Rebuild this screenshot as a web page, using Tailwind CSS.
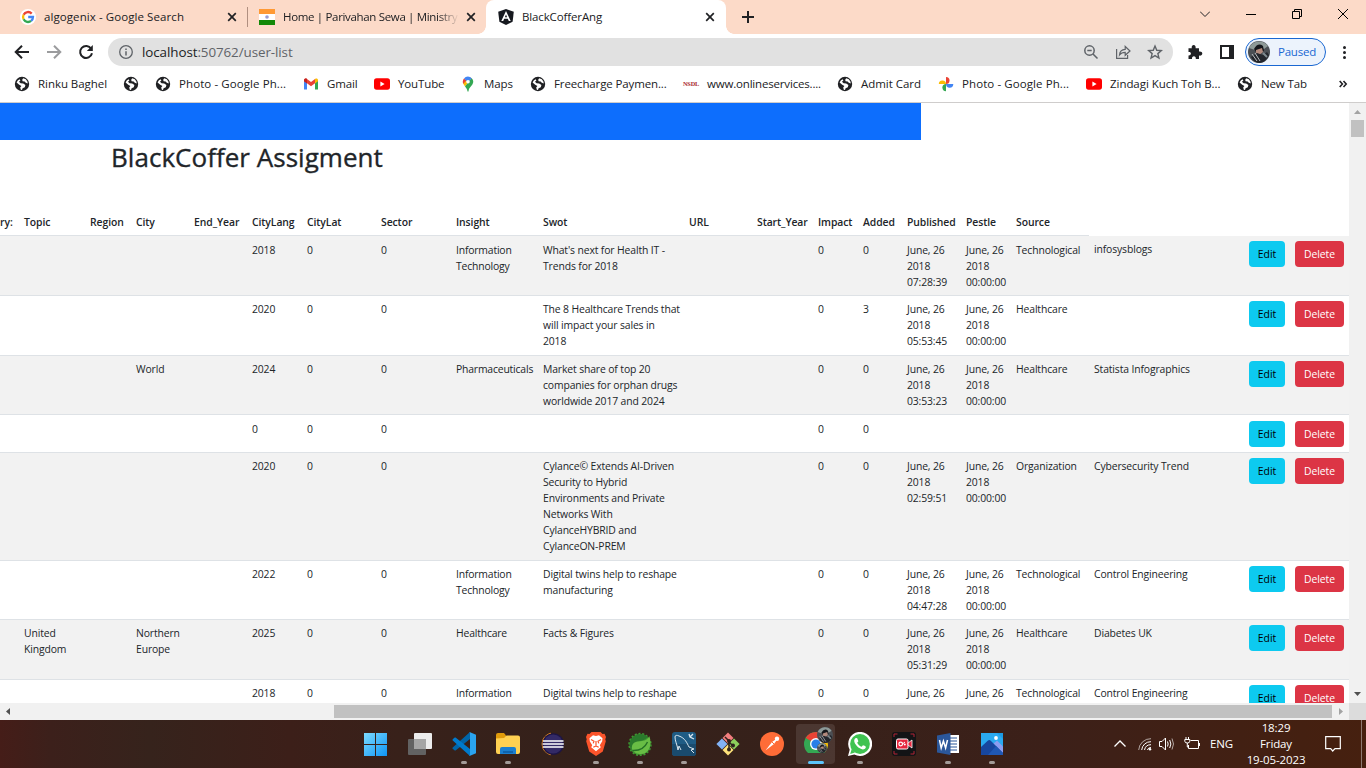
<!DOCTYPE html>
<html lang="en">
<head>
<meta charset="utf-8">
<title>BlackCofferAng</title>
<script src="https://cdn.jsdelivr.net/npm/@tailwindcss/browser@4"></script>
</head>
<body class="w-[1366px] h-[768px] overflow-hidden flex flex-col bg-white font-['Open_Sans','Noto_Sans',sans-serif] text-[#202124]">

<svg class="hidden">
  <symbol id="globe" viewBox="0 0 16 16"><circle cx="8" cy="8" r="7.2" fill="#202124"/><path d="M2.6 6.600Q3.400 4.200 5.600 3.200L6.400 4.400 5 5.800 6.600 7.200 9.200 7.400 11.400 9 10.800 11.200 8.600 12.200 8 14 6.800 13.800 6.200 11.600 7.400 10 5.200 8.800z" fill="#fff"/><path d="M9.200 2.200 11.800 3.300 13.400 5.600 13.800 7.600 11.800 6.800 10.600 5.400 8.600 5.200 8.200 3.800z" fill="#fff"/></symbol>
  <symbol id="yt" viewBox="0 0 16 16"><rect y="2.3" width="16" height="11.4" rx="2.6" fill="#f00"/><path d="M6.4 5.6v4.8L10.6 8z" fill="#fff"/></symbol>
  <symbol id="close" viewBox="0 0 10 10"><path d="M1.2 1.2l7.6 7.6M8.8 1.2 1.2 8.8" stroke="#202124" stroke-width="1.7" fill="none"/></symbol>
  <symbol id="avatar" viewBox="0 0 22 22"><circle cx="11" cy="11" r="11" fill="#4b4f54"/><path d="M1 7A11 11 0 0 1 20 5L16 8 12 6 7 9z" fill="#8e9a98"/><path d="M6 8q4-7 9-3l1 5-8 1z" fill="#15171b"/><path d="M8 9l6-2 1 4-4 3-3-2z" fill="#b28a7d"/><path d="M3 16l6-4 6 2 4-3 2 3q-3 7-9 8-6 0-9-6z" fill="#23262c"/><path d="M4 13l5 7M7 12l5 8" stroke="#b9bcc0" stroke-width="1"/><path d="M15 12l4 4" stroke="#7f8a8f" stroke-width="2"/></symbol>
</svg>

<!-- Tab strip -->
<header class="h-[34px] shrink-0 bg-[#fcdac8] flex items-stretch text-[11.500px] tracking-[-0.130px] whitespace-nowrap">
  <div class="w-[248px] flex items-center pl-5 relative">
    <svg class="w-4 h-4 shrink-0" viewBox="0 0 16 16"><circle cx="8" cy="8" r="8" fill="#fff"/><g fill="none" stroke-width="2.3"><path d="M11.7 4.6A5 5 0 0 0 3.6 5.7" stroke="#ea4335"/><path d="M3.6 5.7a5 5 0 0 0 0 4.6" stroke="#fbbc05"/><path d="M3.6 10.3a5 5 0 0 0 7.5 1.6" stroke="#34a853"/><path d="M11.1 11.9A5 5 0 0 0 13 8H8.2" stroke="#4285f4"/></g></svg>
    <span class="ml-2 w-[183px] tracking-[0.080px]">algogenix - Google Search</span>
    <svg class="w-[10px] h-[10px]"><use href="#close"/></svg>
    <i class="absolute right-0 top-[7px] w-px h-5 bg-[#b08f80]"></i>
  </div>
  <div class="w-[238px] flex items-center pl-[11px]">
    <svg class="w-4 h-4 shrink-0" viewBox="0 0 16 16"><path fill="#ff9933" d="M0 0h16v5H0z"/><path fill="#fff" d="M0 5h16v6H0z"/><path fill="#138808" d="M0 11h16v5H0z"/><circle cx="8" cy="8" r="1.8" fill="#9a9bd0"/></svg>
    <div class="ml-2 w-[176px] overflow-hidden tracking-[-0.330px] [mask-image:linear-gradient(to_right,black_88%,transparent)]">Home | Parivahan Sewa | Ministry</div>
    <svg class="w-[10px] h-[10px] ml-[7px] shrink-0"><use href="#close"/></svg>
  </div>
  <div class="w-[240px] flex items-center pl-3 bg-white rounded-t-lg relative">
    <i class="absolute -left-2 bottom-0 w-2 h-2 bg-[radial-gradient(circle_at_0_0,#fcdac8_7.5px,#fff_8px)]"></i>
    <i class="absolute -right-2 bottom-0 w-2 h-2 bg-[radial-gradient(circle_at_100%_0,#fcdac8_7.5px,#fff_8px)]"></i>
    <svg class="w-4 h-4 shrink-0" viewBox="0 0 16 16"><path d="M8 0l7.8 2.7-1.2 10L8 16l-6.6-3.3L.2 2.700z" fill="#16191f"/><path d="M3.300 12 8 2l4.700 10h-1.900l-1-2.300H6.200l-1 2.300zM6.900 8.200h2.200L8 5.500z" fill="#fff"/></svg>
    <span class="ml-2 w-[183px]">BlackCofferAng</span>
    <svg class="w-[10px] h-[10px]"><use href="#close"/></svg>
  </div>
  <svg class="w-3 h-3 ml-4 mt-[11px]" viewBox="0 0 12 12"><path d="M6 0v12M0 6h12" stroke="#202124" stroke-width="2"/></svg>
  <div class="ml-auto flex pt-[9px] gap-[36px] mr-[18px]">
    <svg class="w-[10px] h-[10px]" viewBox="0 0 10 10"><path d="M0 2.500l5 5 5-5" stroke="#202124" fill="none"/></svg>
    <svg class="w-[10px] h-[10px]" viewBox="0 0 10 10"><path d="M0 5.500h10" stroke="#000"/></svg>
    <svg class="w-[10px] h-[10px]" viewBox="0 0 10 10"><path d="M.5 2.500h7v7h-7zM2.500 2.500v-2h7v7h-2" stroke="#000" fill="none"/></svg>
    <svg class="w-[10px] h-[10px]" viewBox="0 0 10 10"><path d="M0 0l10 10M10 0 0 10" stroke="#000"/></svg>
  </div>
</header>

<!-- Address toolbar -->
<div class="h-9 shrink-0 flex items-center">
  <svg class="w-4 h-4 ml-[14px]" viewBox="0 0 16 16"><path d="M15 8H2M8 1.700 1.700 8 8 14.300" stroke="#202124" stroke-width="2" fill="none"/></svg>
  <svg class="w-4 h-4 ml-4" viewBox="0 0 16 16"><path d="M1 8h13M8 1.700 14.300 8 8 14.300" stroke="#9b9c9e" stroke-width="2" fill="none"/></svg>
  <svg class="w-4 h-4 ml-4" viewBox="0 0 16 16"><path d="M13.200 4.700A6 6 0 1 0 14 9.300" stroke="#202124" stroke-width="2" fill="none"/><path d="M14.800 1v6H8.800z" fill="#202124"/></svg>
  <div class="ml-[14px] w-[1065px] h-7 rounded-full bg-[#e1e1e1] flex items-center pl-[11px]">
    <svg class="w-[14px] h-[14px]" viewBox="0 0 14 14"><circle cx="7" cy="7" r="6.300" fill="none" stroke="#5f6368" stroke-width="1.300"/><path d="M7 6.200v4.300M7 3.500v1.500" stroke="#5f6368" stroke-width="1.500"/></svg>
    <span class="ml-[9px] text-[13.400px] tracking-[-0.080px] whitespace-nowrap text-[#5f6368]"><span class="text-[#202124]">localhost</span>:50762/user-list</span>
    <svg class="w-4 h-4 ml-auto" viewBox="0 0 16 16"><g fill="none" stroke="#5f6368" stroke-width="1.500"><circle cx="6.500" cy="6.500" r="4.700"/><path d="M10 10l4.500 4.500M4.300 6.500h4.400"/></g></svg>
    <svg class="w-4 h-4 ml-4" viewBox="0 0 16 16"><g fill="none" stroke="#5f6368" stroke-width="1.200"><path d="M1.600 5v9.400h11V11"/><path d="M4.500 11c.3-4 2.500-5.600 5.700-5.700V2.500L15 7l-4.800 4.300V8.400C7.600 8.400 5.800 9.200 4.500 11z"/></g></svg>
    <svg class="w-4 h-4 ml-4 mr-[10px]" viewBox="0 0 16 16"><path d="M8 2l1.750 4.250 4.600.35-3.500 3L11.950 14 8 11.600 4.050 14l1.100-4.400-3.500-3 4.600-.35z" fill="none" stroke="#5f6368" stroke-width="1.400"/></svg>
  </div>
  <svg class="w-4 h-4 ml-[14px]" viewBox="0 0 16 16"><path d="M1.500 4.300h3.300C4.300 2.300 5.300 1 6.700 1S9 2.300 8.600 4.300H12v3.300c2-.4 3.300.5 3.300 2s-1.300 2.400-3.300 2V15H8.800c.2-1.800-.6-2.700-1.900-2.700S4.800 13.200 5 15H1.500v-3.600c1.700.1 2.400-.6 2.400-1.800S3.200 7.800 1.500 8z" fill="#202124"/></svg>
  <svg class="w-[14px] h-[14px] ml-[17px]" viewBox="0 0 14 14"><path d="M0 0h14v14H0zM2 2v10h7V2z" fill="#202124" fill-rule="evenodd"/></svg>
  <div class="ml-[11px] w-[81px] h-7 rounded-full border border-[#1967d2] bg-[#ecf3fc] flex items-center pl-0.5">
    <svg class="w-[22px] h-[22px]"><use href="#avatar"/></svg>
    <span class="ml-2 text-[11.500px] tracking-[-0.220px] text-[#1967d2] whitespace-nowrap">Paused</span>
  </div>
  <div class="ml-[17px] flex flex-col gap-[2px]"><i class="w-[3px] h-[3px] rounded-full bg-[#202124]"></i><i class="w-[3px] h-[3px] rounded-full bg-[#202124]"></i><i class="w-[3px] h-[3px] rounded-full bg-[#202124]"></i></div>
</div>

<!-- Bookmarks bar -->
<nav class="h-[33px] shrink-0 border-b border-[#cfcdcc] flex items-center pl-[14px] pb-[4px] text-[11.500px] tracking-[-0.130px] whitespace-nowrap">
  <a class="w-[109px] flex items-center gap-2"><svg class="w-4 h-4"><use href="#globe"/></svg><span class="tracking-[-0.050px]">Rinku Baghel</span></a>
  <a class="w-[32px] flex items-center"><svg class="w-4 h-4"><use href="#globe"/></svg></a>
  <a class="w-[148px] flex items-center gap-2"><svg class="w-4 h-4"><use href="#globe"/></svg><span class="tracking-[0.090px]">Photo - Google Ph...</span></a>
  <a class="w-[71px] flex items-center gap-2"><svg class="w-4 h-4" viewBox="0 0 16 16"><path d="M1 4v9.500h3V7z" fill="#4285f4"/><path d="M15 4v9.500h-3V7z" fill="#34a853"/><path d="M1 4.500C1 2.500 3 2 4 3l4 3 4-3v4.300L8 10.300 4 7.300 1 5z" fill="#ea4335"/><path d="M12 3c1.200-1 3-.5 3 1.500v.7l-3 2.300z" fill="#fbbc04"/><path d="M1 4.500C1 2.500 3 2 4 3v4.500L1 5.200z" fill="#c5221f"/></svg><span>Gmail</span></a>
  <a class="w-[86px] flex items-center gap-2"><svg class="w-4 h-4"><use href="#yt"/></svg><span>YouTube</span></a>
  <a class="w-[70px] flex items-center gap-2"><svg class="w-4 h-4" viewBox="0 0 16 16"><path d="M4 2.400A5.200 5.200 0 0 0 3.400 8L8 5.800z" fill="#ea4335"/><path d="M3.300 7.800 5 10.400 11.500 2.200 9.600 1z" fill="#fbbc04"/><path d="M11.500 2A5.200 5.200 0 0 1 12.500 8.300C11.300 10.600 9 11.500 8.500 15.200c-.2.600-.8.600-1 0C7.200 12.800 6 11.700 5 10.400z" fill="#34a853"/><path d="M4 2.400A5.200 5.200 0 0 1 11.700 2.200L8 6.500z" fill="#4285f4"/><circle cx="8" cy="5.700" r="1.800" fill="#fff"/></svg><span>Maps</span></a>
  <a class="w-[153px] flex items-center gap-2"><svg class="w-4 h-4"><use href="#globe"/></svg><span>Freecharge Paymen...</span></a>
  <a class="w-[154px] flex items-center gap-2"><span class="w-4 font-['Liberation_Serif',serif] font-bold text-[6.300px] leading-4 tracking-[-0.200px] text-[#a9282e]">NSDL</span><span class="tracking-[-0.180px]">www.onlineservices....</span></a>
  <a class="w-[101px] flex items-center gap-2"><svg class="w-4 h-4"><use href="#globe"/></svg><span class="tracking-[-0.030px]">Admit Card</span></a>
  <a class="w-[148px] flex items-center gap-2"><svg class="w-4 h-4" viewBox="0 0 16 16"><path d="M8 8V1a3.500 3.500 0 0 1 0 7z" fill="#ea4335"/><path d="M8 8h7.300a3.500 3.500 0 0 1-7.300 0z" fill="#4285f4"/><path d="M8 8v7.200A3.500 3.500 0 0 1 8 8z" fill="#34a853"/><path d="M8 8H.8A3.500 3.500 0 0 1 8 8z" fill="#fbbc04"/></svg><span class="tracking-[0.090px]">Photo - Google Ph...</span></a>
  <a class="w-[151px] flex items-center gap-2"><svg class="w-4 h-4"><use href="#yt"/></svg><span class="tracking-[-0.050px]">Zindagi Kuch Toh B...</span></a>
  <a class="w-[101px] flex items-center gap-2"><svg class="w-4 h-4"><use href="#globe"/></svg><span>New Tab</span></a>
  <svg class="w-[10px] h-2" viewBox="0 0 10 8"><path d="M1.700 1l2.700 3-2.700 3M5.500 1l2.700 3-2.700 3" stroke="#202124" stroke-width="1.600" fill="none"/></svg>
</nav>

<!-- Page viewport -->
<main class="h-[600px] shrink-0 flex text-[#212529]">
  <section class="w-[1349px] h-full overflow-hidden">
    <div class="w-[921px] h-[37px] bg-[#0d6efd]"></div>
    <h2 class="h-[69px] pl-[111px] text-[26px] leading-[35px] font-medium tracking-[0.030px] [-webkit-text-stroke:0.350px_#212529] whitespace-nowrap">BlackCoffer Assigment</h2>
    <table class="w-[1349px] table-fixed border-collapse text-[10.400px] leading-4">
      <colgroup><col class="w-[19px]"><col class="w-[66px]"><col class="w-[46px]"><col class="w-[58px]"><col class="w-[58px]"><col class="w-[55px]"><col class="w-[74px]"><col class="w-[75px]"><col class="w-[87px]"><col class="w-[146px]"><col class="w-[68px]"><col class="w-[61px]"><col class="w-[45px]"><col class="w-[44px]"><col class="w-[59px]"><col class="w-[50px]"><col class="w-[78px]"><col class="w-[155px]"><col class="w-[105px]"></colgroup>
      <thead><tr id="head" class="h-[26px]"></tr></thead>
      <tbody id="rows"></tbody>
    </table>
  </section>
  <aside class="w-[17px] bg-[#f1f1f1] flex flex-col items-center">
    <svg class="w-[17px] h-[17px]" viewBox="0 0 17 17"><path d="M5 11h7L8.500 7z" fill="#a3a3a3"/></svg>
    <div class="w-[13px] h-[17px] bg-[#c1c1c1]"></div>
    <svg class="w-[17px] h-[17px] mt-auto" viewBox="0 0 17 17"><path d="M5 6h7l-3.500 4z" fill="#505050"/></svg>
  </aside>
</main>
<div class="h-[17px] shrink-0 flex items-center bg-[#f1f1f1]">
  <svg class="w-[17px] h-[17px]" viewBox="0 0 17 17"><path d="M10 5v7L6 8.500z" fill="#505050"/></svg>
  <div class="ml-[317px] w-[998px] h-[13px] bg-[#c1c1c1]"></div>
  <svg class="w-[17px] h-[17px]" viewBox="0 0 17 17"><path d="M7 5v7l4-3.500z" fill="#a3a3a3"/></svg>
  <div class="w-[17px] h-[17px] bg-[#dcdcdc]"></div>
</div>

<!-- Taskbar -->
<footer class="h-12 shrink-0 flex items-stretch text-white bg-[linear-gradient(90deg,#451d18_0,#3c201b_50px,#36231c_150px,#3c1f19_290px,#38211a_400px,#34211b_600px,#37211a_800px,#3c2019_1050px,#46200f_1366px)]">
  <div class="ml-[354px] flex">
    <div class="w-11 grid place-items-center"><svg class="w-6 h-6" viewBox="0 0 24 24"><defs><linearGradient id="wn" x1="0" y1="0" x2="24" y2="24" gradientUnits="userSpaceOnUse"><stop offset="0" stop-color="#7fdcff"/><stop offset="1" stop-color="#0b93f5"/></linearGradient></defs><path d="M0 1h11v11H0zM12 1h11v11H12zM0 13h11v11H0zM12 13h11v11H12z" fill="url(#wn)"/></svg></div>
    <div class="w-11 grid place-items-center"><svg class="w-6 h-6" viewBox="0 0 24 24"><rect x="6" y="1" width="18" height="16" rx="1" fill="#ececec"/><rect y="7" width="18" height="16" rx="1" fill="#626262"/><path d="M6 7h12v10H6z" fill="#a5a5a5"/></svg></div>
    <div class="w-11 grid place-items-center relative"><svg class="w-6 h-6" viewBox="0 0 24 24"><path d="M18 0 1 15.200c-.9.800-.6 1.300 0 1.800l1.400 1.200c.5.400 1 .4 1.500 0L18 7z" fill="#0065a9"/><path d="M18 24 1 8.800C.2 8 .4 7.500 1 7l1.400-1.200c.5-.4 1-.4 1.500 0L18 17z" fill="#007acc"/><path d="M17.500 0 24 2.800v18.400L17.500 24c-.5 0 .5-.6.5-1.200V1.200C18 .6 17 0 17.500 0z" fill="#2aa4f0"/></svg><i class="absolute bottom-1 w-[6px] h-[3px] rounded-full bg-[#a39b98]"></i></div>
    <div class="w-11 grid place-items-center relative"><svg class="w-6 h-6" viewBox="0 0 24 24"><path d="M0 3q0-2 2-2h6l2 2.500V8H0z" fill="#e09b0b"/><path d="M0 6.500 8 6l2.500-2.500H22q2 0 2 2V20q0 2-2 2H2q-2 0-2-2z" fill="#ffd152"/><path d="M4 22v-5q0-2 2-2h12q2 0 2 2v5z" fill="#1b7fd0"/><path d="M7 19h10v2H7z" fill="#0e63ae"/></svg><i class="absolute bottom-1 w-[6px] h-[3px] rounded-full bg-[#a39b98]"></i></div>
    <div class="w-11 grid place-items-center"><svg class="w-6 h-6" viewBox="0 0 24 24"><path d="M11 1.200A11 11 0 0 0 11 22.800 12 12 0 0 1 11 1.200z" fill="#f7941e" stroke="#f7941e"/><circle cx="13.200" cy="12" r="10.800" fill="#1d1545"/><circle cx="13.200" cy="12" r="9.500" fill="#332a66"/><path d="M3 9h20.500M2.600 12h21.200M3 15h20.500" stroke="#fff" stroke-width="1.500"/></svg></div>
    <div class="w-11 grid place-items-center relative"><svg class="w-6 h-6" viewBox="0 0 24 24"><path d="M7.500 0h9l2 2 2-.200L22 5l-.700 2.200.500 2-3 10.300L12 24l-6.800-4.500-3-10.300.500-2L2 5l1.500-3.200 2 .200z" fill="#fb542b"/><path d="M12 4l3-.7 3.500 3-.3 3-2.400 4 1 2-4.800 4-4.800-4 1-2-2.400-4-.3-3L9 3.300z" fill="#fff"/><path d="M7 7.500l3 1.700-.8 2.200M17 7.500l-3 1.700.8 2.200M12 9v5M9.300 15.300 12 14l2.700 1.300" stroke="#fb542b" stroke-width="1.200" fill="none"/></svg><i class="absolute bottom-1 w-[6px] h-[3px] rounded-full bg-[#a39b98]"></i></div>
    <div class="w-11 grid place-items-center relative"><svg class="w-6 h-6" viewBox="0 0 24 24"><circle cx="12" cy="12.500" r="10.500" fill="#3f9632"/><circle cx="12" cy="12.500" r="10.600" fill="none" stroke="#3f9632" stroke-width="2.200" stroke-dasharray="2 1.700"/><path d="M1.500 13A11 11 0 0 1 20 5Q16 9 9 9.500 3 11 3.500 19z" fill="#2a7a2c"/><path d="M4 17C3 10 9 9.500 14 9c4-.5 6-2 7.200-5 3.500 9-.700 18-8.200 18-4 0-7-1-9-5z" fill="#68bd45"/><path d="M4.500 18.500q11 .5 15-8.500" stroke="#236f25" stroke-width="1.400" fill="none"/></svg><i class="absolute bottom-1 w-[6px] h-[3px] rounded-full bg-[#a39b98]"></i></div>
    <div class="w-11 grid place-items-center relative"><svg class="w-6 h-6" viewBox="0 0 24 24"><rect width="24" height="24" rx="3" fill="#1f5c85"/><path d="M0 12h24v9q0 3-3 3H3q-3 0-3-3z" fill="#1a4b6e"/><path d="M6 18C5 12 3 9 3 5c0-2 2-2 4-1 6 2 8 7 10 11l5 2-3 1 3 3M6 18l1-4 2 4" stroke="#dbe7ef" fill="none"/><path d="M17 2l1 3 4 2M21 2l-3 3" stroke="#dbe7ef" stroke-width="1.300" fill="none"/></svg><i class="absolute bottom-1 w-[6px] h-[3px] rounded-full bg-[#a39b98]"></i></div>
    <div class="w-11 grid place-items-center"><svg class="w-6 h-6" viewBox="0 0 24 24"><g transform="rotate(45 12 12)"><rect x="3.800" y="3.800" width="7.800" height="7.800" fill="#f27e7e"/><rect x="12.400" y="3.800" width="7.800" height="7.800" fill="#8ccf5c"/><rect x="3.800" y="12.400" width="7.800" height="7.800" fill="#82b2f5"/><rect x="12.400" y="12.400" width="7.800" height="7.800" fill="#ffe27a"/></g><path d="M9 5l4 4v9M13 10l4 4" stroke="#2d211c" stroke-width="1.500" fill="none"/><circle cx="13" cy="9" r="2" fill="#2d211c"/><circle cx="17" cy="13.500" r="2" fill="#2d211c"/><circle cx="13" cy="17.500" r="2" fill="#2d211c"/></svg></div>
    <div class="w-11 grid place-items-center"><svg class="w-6 h-6" viewBox="0 0 24 24"><circle cx="12" cy="12" r="12" fill="#ff6c37"/><path d="M5.500 18.500 12 10l3.500-2.500 1 1L14 12z" fill="#fff"/><circle cx="17" cy="6.800" r="2.200" fill="#fff"/><path d="M12 10l2 2" stroke="#ff6c37"/></svg></div>
    <div class="w-11 grid place-items-center relative"><div class="absolute left-0.5 top-1 w-[39px] h-10 rounded bg-white/10"></div><svg class="w-[30px] h-[30px] absolute left-[9px] top-[3px]" viewBox="0 0 30 30"><circle cx="13" cy="21" r="12" fill="#34a853"/><path d="M2.600 15A12 12 0 0 1 23.400 15L13 21z" fill="#ea4335"/><path d="M2.600 15 10 26l3-4z" fill="#34a853"/><path d="M23.400 15A12 12 0 0 1 22 29l-4-3-5-9z" fill="#fbbc05"/><circle cx="13" cy="21" r="6" fill="#fff"/><circle cx="13" cy="21" r="4.600" fill="#287fe8"/><use href="#avatar" x="14" y="4" width="16" height="16"/><use href="#avatar" x="14" y="20" width="10" height="10"/></svg><i class="absolute left-[14px] bottom-1 w-4 h-[3px] rounded-full bg-[#5cc5fb]"></i></div>
    <div class="w-11 grid place-items-center relative"><svg class="w-6 h-6" viewBox="0 0 24 24"><path d="M0 24l1.700-6.200A12 12 0 1 1 6.300 22.400z" fill="#fff"/><circle cx="12" cy="12" r="9.900" fill="#3fc351"/><path d="M2.200 21.900l1.500-5 3.300 3.500z" fill="#3fc351"/><path d="M8.200 6c-.9 0-2 1.200-2 2.800C6.200 12 11 17.200 14.800 17.400c1.600 0 3-.9 3.100-2.600 0-.5-2.300-1.600-2.800-1.600-.6 0-1 1.500-1.600 1.500-1.300-.3-3.900-2.600-4.200-4 0-.5 1.200-1 1-1.700L9.200 6.200z" fill="#fff"/></svg><i class="absolute bottom-1 w-[6px] h-[3px] rounded-full bg-[#a39b98]"></i></div>
    <div class="w-11 grid place-items-center"><svg class="w-6 h-6" viewBox="0 0 24 24"><rect width="24" height="24" rx="3" fill="#121416"/><path d="M2 5V2h3.500M18.500 2H22v3M2 19v3h3.500M18.500 22H22v-3" stroke="#b32334" fill="none"/><rect x="4.500" y="7" width="11.500" height="10" rx="1.500" fill="#e5263e" stroke="#fff"/><path d="M16 11l4-3v8l-4-3z" fill="#e5263e" stroke="#fff" stroke-width=".8"/><circle cx="8.700" cy="12" r="1.800" fill="none" stroke="#fff" stroke-width="1.200"/><path d="M10.500 12l2.500-2" stroke="#fff"/><circle cx="12.800" cy="12.500" r="1" fill="#fff"/></svg></div>
    <div class="w-11 grid place-items-center relative"><svg class="w-6 h-6" viewBox="0 0 24 24"><path d="M13 3h10v18H13z" fill="#fff"/><path d="M14 6h7M14 9h7M14 12h7M14 15h7M14 18h7" stroke="#2b579a" stroke-width="1.200"/><path d="M1 3.500 14.500 1v22L1 20.500z" fill="#2b579a"/><path d="M3.500 8l1.700 8 2.200-7 2.200 7 1.900-8" stroke="#fff" stroke-width="1.500" fill="none"/></svg><i class="absolute bottom-1 w-[6px] h-[3px] rounded-full bg-[#a39b98]"></i></div>
    <div class="w-11 grid place-items-center relative"><svg class="w-6 h-6" viewBox="0 0 24 24"><path d="M1 1h22v22H1z" fill="#1b9be6"/><path d="M1 1h16l6 6v10H1z" fill="#2aa9f0"/><path d="M13 12l4-3.500 6 6V23H12z" fill="#8b9df0"/><path d="M1 15l7-6.500q1.500-1 3 .5L23 21v2H1z" fill="#17469e"/><path d="M8 23l8-9 7 7v2z" fill="#1f58b5"/><circle cx="16" cy="6" r="1.900" fill="#fff"/></svg><i class="absolute bottom-1 w-[6px] h-[3px] rounded-full bg-[#a39b98]"></i></div>
  </div>
  <div class="ml-[99px] w-[121px] flex items-center">
    <svg class="w-[14px] h-[14px]" viewBox="0 0 14 14"><path d="M1.500 9.500 7 4l5.500 5.500" stroke="#fff" stroke-width="1.300" fill="none"/></svg>
    <svg class="w-[14px] h-[14px] ml-[11px]" viewBox="0 0 14 14"><g fill="none" stroke="#fff"><path d="M.7 13A12 12 0 0 1 13 1.700" opacity=".6"/><path d="M3.700 13A9 9 0 0 1 13 4.700"/><path d="M6.500 13A6.500 6.500 0 0 1 13 7.700"/><path d="M9.300 13A4 4 0 0 1 13 10.500"/></g><circle cx="12" cy="12.300" r="1.200" fill="#fff"/></svg>
    <svg class="w-4 h-4 ml-[7px]" viewBox="0 0 16 16"><g fill="none" stroke="#fff"><path d="M.5 5.500h2.500L6.500 2v12L3 10.500H.5z"/><path d="M8.500 5.500q1.300 2.500 0 5"/><path d="M10.700 4q2.300 4 0 8"/><path d="M13 2.500q3 5.500 0 11" opacity=".6"/></g></svg>
    <svg class="w-4 h-4 ml-[9px]" viewBox="0 0 16 16"><g fill="none" stroke="#fff"><path d="M6.500 4.500h8v8h-10V9M15.500 7v3"/><path d="M2 1v2.500M4.500 1v2.500M.8 3.500h5v1.700q0 1.800-2.500 1.800T.8 5.200zM3.300 7v4h1.200"/></g></svg>
    <span class="ml-[10px] text-[11.500px] tracking-[-0.130px]">ENG</span>
  </div>
  <div class="ml-[10px] w-[64px] text-[11.500px] tracking-[-0.130px] leading-4 flex flex-col items-center whitespace-nowrap"><span>18:29</span><span>Friday</span><span>19-05-2023</span></div>
  <svg class="w-4 h-4 mt-4 ml-[17px]" viewBox="0 0 16 16"><path d="M.7.700h14.600v12H10L7.700 15l-2-2.300h-5z" fill="none" stroke="#fff" stroke-width="1.200"/></svg>
  <i class="ml-auto mr-1 w-px bg-[#8d7971]"></i>
</footer>

<script>
const heads = ["ry:","Topic","Region","City","End_Year","CityLang","CityLat","Sector","Insight","Swot","URL","Start_Year","Impact","Added","Published","Pestle","Source"];
document.getElementById("head").innerHTML = heads.map((h, i) =>
  `<th class="p-0 text-left font-semibold whitespace-nowrap tracking-[-0.080px] border-b border-[#dee2e6] ${i ? "pl-[5px]" : "pl-0"}">${h}</th>`).join("") + `<th class="border-b border-white"></th><th class="border-b border-white"></th>`;

// Row height class, padding class, then the cell values by column index
const P = "June, 26<br>2018<br>", Z = P + "00:00:00";
const rows = [
  ["h-[60px]","pt-[6px]",{5:"2018",6:"0",7:"0",8:"Information<br>Technology",9:"What's next for Health IT -<br>Trends for 2018",12:"0",13:"0",14:P+"07:28:39",15:Z,16:"Technological",17:"infosysblogs"}],
  ["h-[60px]","pt-[5px]",{5:"2020",6:"0",7:"0",9:"The 8 Healthcare Trends that<br>will impact your sales in<br>2018",12:"0",13:"3",14:P+"05:53:45",15:Z,16:"Healthcare"}],
  ["h-[59px]","pt-[5px]",{3:"World",5:"2024",6:"0",7:"0",8:"Pharmaceuticals",9:"Market share of top 20<br>companies for orphan drugs<br>worldwide 2017 and 2024",12:"0",13:"0",14:P+"03:53:23",15:Z,16:"Healthcare",17:"Statista Infographics"}],
  ["h-[38px]","pt-[6px]",{5:"0",6:"0",7:"0",12:"0",13:"0"}],
  ["h-[108px]","pt-[5px]",{5:"2020",6:"0",7:"0",9:"Cylance© Extends AI-Driven<br>Security to Hybrid<br>Environments and Private<br>Networks With<br>CylanceHYBRID and<br>CylanceON-PREM",12:"0",13:"0",14:P+"02:59:51",15:Z,16:"Organization",17:"Cybersecurity Trend"}],
  ["h-[59px]","pt-[5px]",{5:"2022",6:"0",7:"0",8:"Information<br>Technology",9:"Digital twins help to reshape<br>manufacturing",12:"0",13:"0",14:P+"04:47:28",15:Z,16:"Technological",17:"Control Engineering"}],
  ["h-[60px]","pt-[5px]",{1:"United<br>Kingdom",3:"Northern<br>Europe",5:"2025",6:"0",7:"0",8:"Healthcare",9:"Facts &amp; Figures",12:"0",13:"0",14:P+"05:31:29",15:Z,16:"Healthcare",17:"Diabetes UK"}],
  ["h-[24px]","pt-[5px]",{5:"2018",6:"0",7:"0",8:"Information",9:"Digital twins help to reshape",12:"0",13:"0",14:"June, 26",15:"June, 26",16:"Technological",17:"Control Engineering"}]
];
document.getElementById("rows").innerHTML = rows.map(([h, pt, cells], r) => {
  let tds = "";
  for (let c = 0; c < 18; c++) tds += `<td class="p-0 pl-[5px] align-top whitespace-nowrap ${c === 8 ? "tracking-[-0.180px]" : "tracking-[-0.130px]"} ${c === 17 && r === 0 ? "pt-[5px]" : pt}">${cells[c] || ""}</td>`;
  const bp = r === 3 ? "pt-[6px]" : "pt-[5px]";
  tds += `<td class="p-0 align-top ${bp}"><div class="flex gap-[10px] pl-[5px]"><button class="w-[36px] h-[26px] rounded bg-[#0dcaf0] text-black">Edit</button><button class="w-[49px] h-[26px] rounded bg-[#dc3545] text-white tracking-[-0.050px]">Delete</button></div></td>`;
  return `<tr class="${h} border-b border-[#dee2e6] ${r % 2 ? "bg-white" : "bg-[#f2f2f2]"}">${tds}</tr>`;
}).join("");
</script>
</body>
</html>
